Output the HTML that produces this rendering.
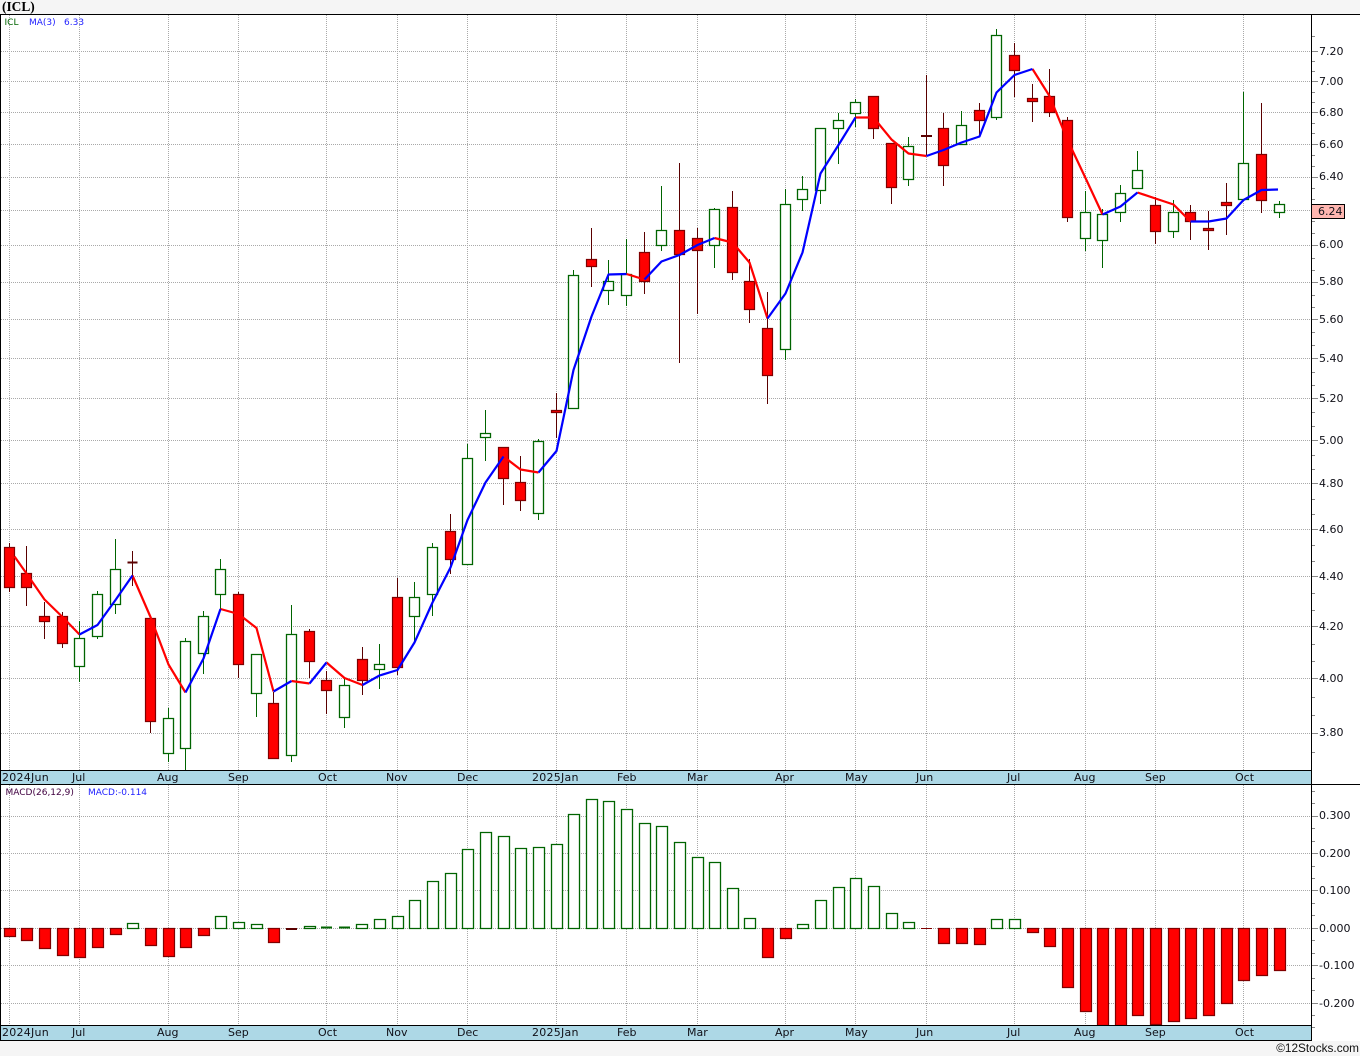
<!DOCTYPE html>
<html lang="en">
<head>
<meta charset="utf-8">
<title>ICL</title>
<style>
html,body{margin:0;padding:0;background:#f5f5f5;width:1360px;height:1056px;overflow:hidden}
svg{display:block}
text{font-family:"DejaVu Sans","Liberation Sans",sans-serif;font-size:11px;fill:#101018}
.s{font-size:9px}
.y{letter-spacing:.25px}
.g{fill:none;stroke:#a9a9a9;stroke-width:1;stroke-dasharray:1 1}
</style>
</head>
<body>
<svg xmlns="http://www.w3.org/2000/svg" width="1360" height="1056" viewBox="0 0 1360 1056">
<rect width="1360" height="1056" fill="#f5f5f5"/>
<rect x="0" y="14" width="1360" height="1027" fill="#fff"/>
<text x="2" y="11" style="font-family:'Liberation Serif',serif;font-weight:bold;font-size:13.4px;fill:#000">(ICL)</text>

<!-- price grid -->
<path class="g" d="M1 51.5H1311M1 81.5H1311M1 112.5H1311M1 144.5H1311M1 177.5H1311M1 210.5H1311M1 245.5H1311M1 282.5H1311M1 319.5H1311M1 358.5H1311M1 398.5H1311M1 440.5H1311M1 483.5H1311M1 529.5H1311M1 576.5H1311M1 626.5H1311M1 678.5H1311M1 733.5H1311"/>
<path class="g" d="M9.5 15V770M79.5 15V770M168.5 15V770M238.5 15V770M326.5 15V770M397.5 15V770M467.5 15V770M556.5 15V770M626.5 15V770M697.5 15V770M785.5 15V770M855.5 15V770M926.5 15V770M1014.5 15V770M1085.5 15V770M1155.5 15V770M1243.5 15V770"/>
<!-- macd grid -->
<path class="g" d="M1 816.5H1311M1 853.5H1311M1 890.5H1311M1 928.5H1311M1 965.5H1311M1 1003.5H1311"/>
<path class="g" d="M9.5 785V1026M79.5 785V1026M168.5 785V1026M238.5 785V1026M326.5 785V1026M397.5 785V1026M467.5 785V1026M556.5 785V1026M626.5 785V1026M697.5 785V1026M785.5 785V1026M855.5 785V1026M926.5 785V1026M1014.5 785V1026M1085.5 785V1026M1155.5 785V1026M1243.5 785V1026"/>

<!-- wicks -->
<path fill="none" stroke="#006400" d="M79.5 621V682M97.5 591V639M115.5 539V614M168.5 708V762M185.5 638V770M203.5 611V674M220.5 559V609M256.5 654V717M291.5 605V762M344.5 678V728M379.5 644V689M414.5 582V643M432.5 543V616M467.5 444V564M485.5 410V461M538.5 439V520M573.5 270V408M608.5 260V305M626.5 239V306M661.5 186V251M714.5 208V268M785.5 189V360M802.5 176V211M820.5 128V204M838.5 113V164M855.5 99V127M908.5 137V186M961.5 111V145M996.5 29V120M1085.5 191V251M1102.5 209V268M1120.5 185V222M1137.5 151V188M1173.5 200V238M1243.5 92V199M1279.5 201V218"/>
<path fill="none" stroke="#5a0000" d="M9.5 543V592M26.5 546V606M44.5 602V639M62.5 612V648M132.5 551V586M150.5 618V733M238.5 592V678M273.5 692V759M309.5 629V678M326.5 671V714M362.5 647V695M397.5 578V675M450.5 514V574M503.5 447V505M520.5 456V511M556.5 393V438M591.5 228V287M644.5 232V294M679.5 163V363M697.5 228V314M732.5 191V280M749.5 259V323M767.5 292V404M873.5 96V139M891.5 143V204M926.5 75V156M943.5 113V186M979.5 103V137M1014.5 43V97M1032.5 84V122M1049.5 69V117M1067.5 117V222M1155.5 197V244M1190.5 205V240M1208.5 211V250M1226.5 183V235M1261.5 103V213"/>

<!-- hollow bodies -->
<path fill="#fff" stroke="#006400" stroke-width="1.3" d="M74.5 638.5h10V666.5h-10zM92.5 594.5h10V636.5h-10zM110.5 569.5h10V604.5h-10zM163.5 718.5h10V753.5h-10zM180.5 641.5h10V748.5h-10zM198.5 616.5h10V653.5h-10zM215.5 569.5h10V594.5h-10zM251.5 654.5h10V693.5h-10zM286.5 634.5h10V755.5h-10zM339.5 685.5h10V717.5h-10zM374.5 664.5h10V669.5h-10zM409.5 597.5h10V616.5h-10zM427.5 547.5h10V594.5h-10zM462.5 458.5h10V564.5h-10zM480.5 433.5h10V437.5h-10zM533.5 441.5h10V513.5h-10zM568.5 275.5h10V408.5h-10zM603.5 281.5h10V290.5h-10zM621.5 274.5h10V295.5h-10zM656.5 230.5h10V245.5h-10zM709.5 209.5h10V245.5h-10zM780.5 204.5h10V349.5h-10zM797.5 189.5h10V199.5h-10zM815.5 128.5h10V190.5h-10zM833.5 120.5h10V128.5h-10zM850.5 102.5h10V113.5h-10zM903.5 146.5h10V179.5h-10zM956.5 125.5h10V144.5h-10zM991.5 35.5h10V117.5h-10zM1080.5 212.5h10V238.5h-10zM1097.5 214.5h10V240.5h-10zM1115.5 193.5h10V212.5h-10zM1132.5 170.5h10V188.5h-10zM1168.5 212.5h10V231.5h-10zM1238.5 163.5h10V199.5h-10zM1274.5 204.5h10V212.5h-10z"/>
<!-- filled bodies -->
<path fill="#f00" stroke="#800000" stroke-width="1.2" d="M4.5 547.5h10V587.5h-10zM21.5 573.5h10V587.5h-10zM39.5 616.5h10V621.5h-10zM57.5 616.5h10V643.5h-10zM145.5 618.5h10V721.5h-10zM233.5 594.5h10V664.5h-10zM268.5 703.5h10V758.5h-10zM304.5 631.5h10V661.5h-10zM321.5 680.5h10V690.5h-10zM357.5 659.5h10V680.5h-10zM392.5 597.5h10V667.5h-10zM445.5 531.5h10V559.5h-10zM498.5 447.5h10V478.5h-10zM515.5 482.5h10V500.5h-10zM551.5 410.5h10V412.5h-10zM586.5 259.5h10V266.5h-10zM639.5 252.5h10V281.5h-10zM674.5 230.5h10V254.5h-10zM692.5 238.5h10V250.5h-10zM727.5 207.5h10V272.5h-10zM744.5 281.5h10V309.5h-10zM762.5 328.5h10V375.5h-10zM868.5 96.5h10V128.5h-10zM886.5 143.5h10V187.5h-10zM938.5 128.5h10V165.5h-10zM974.5 110.5h10V120.5h-10zM1009.5 55.5h10V70.5h-10zM1027.5 98.5h10V101.5h-10zM1044.5 96.5h10V112.5h-10zM1062.5 120.5h10V217.5h-10zM1150.5 205.5h10V231.5h-10zM1185.5 212.5h10V221.5h-10zM1203.5 228.5h10V230.5h-10zM1221.5 202.5h10V205.5h-10zM1256.5 154.5h10V200.5h-10z"/>
<path fill="none" stroke="#5a0000" stroke-width="2" d="M127.5 562.5h10M921 136h11"/>

<!-- moving average -->
<g fill="none" stroke-width="2.2" stroke-linejoin="round">
<path stroke="#f00" d="M14.5 556.5L26.5 573.5L44.5 599.5L62.5 617L79.5 634.5M132.5 575.5L150.5 617L168.5 664.5L185.5 692.5M220.5 609L238.5 614L256.5 628L273.5 691.5M291.5 681L309.5 683.5M326.5 662.5L344.5 678L362.5 685M503.5 456.5L520.5 469.5L538.5 472.5M626.5 274L644.5 279.5M714.5 238L732.5 242.5L749.5 262.5L767.5 318.5M855.5 117.5L873.5 117.5L891.5 139.5L908.5 153.5L926.5 156M1032.5 69L1049.5 96L1067.5 140L1085.5 178L1102.5 214.5M1137.5 192.5L1155.5 198.5L1173.5 204.5L1190.5 221.5"/>
<path stroke="#00f" d="M79.5 634.5L97.5 625L115.5 600L132.5 575.5M185.5 692.5L203.5 658.5L220.5 609M273.5 691.5L291.5 681M309.5 683.5L326.5 662.5M362.5 685L379.5 675.5L397.5 670L414.5 642.5L432.5 602.5L450.5 567.5L467.5 520L485.5 482.5L503.5 456.5M538.5 472.5L556.5 451L573.5 370L591.5 316.5L608.5 274.5L626.5 274M644.5 279.5L661.5 261.5L679.5 255L697.5 245L714.5 238M767.5 318.5L785.5 293.5L802.5 252.5L820.5 173.5L838.5 145L855.5 117.5M926.5 156L943.5 150L961.5 142.5L979.5 136.5L996.5 92.5L1014.5 75L1032.5 69M1102.5 214.5L1120.5 206.5L1137.5 192.5M1190.5 221.5L1208.5 221.5L1226.5 218.5L1243.5 200L1261.5 190L1278 189.5"/>
</g>

<!-- macd bars -->
<path fill="#fff" stroke="#006400" stroke-width="1.3" d="M127.5 923.5h11V928.5h-11zM215.5 916.5h11V928.5h-11zM233.5 922.5h11V928.5h-11zM251.5 924.5h11V928.5h-11zM304.5 926.5h11V928.5h-11zM374.5 919.5h11V928.5h-11zM356.5 924.5h11V928.5h-11zM392.5 916.5h11V928.5h-11zM409.5 900.5h11V928.5h-11zM427.5 881.5h11V928.5h-11zM445.5 873.5h11V928.5h-11zM462.5 849.5h11V928.5h-11zM480.5 832.5h11V928.5h-11zM498.5 836.5h11V928.5h-11zM515.5 848.5h11V928.5h-11zM533.5 847.5h11V928.5h-11zM551.5 844.5h11V928.5h-11zM568.5 814.5h11V928.5h-11zM586.5 799.5h11V928.5h-11zM603.5 801.5h11V928.5h-11zM621.5 809.5h11V928.5h-11zM639.5 823.5h11V928.5h-11zM656.5 826.5h11V928.5h-11zM674.5 842.5h11V928.5h-11zM692.5 857.5h11V928.5h-11zM709.5 862.5h11V928.5h-11zM727.5 888.5h11V928.5h-11zM744.5 918.5h11V928.5h-11zM797.5 924.5h11V928.5h-11zM815.5 900.5h11V928.5h-11zM833.5 887.5h11V928.5h-11zM850.5 878.5h11V928.5h-11zM868.5 886.5h11V928.5h-11zM886.5 913.5h11V928.5h-11zM903.5 922.5h11V928.5h-11zM991.5 919.5h11V928.5h-11zM1009.5 919.5h11V928.5h-11z"/>
<path fill="none" stroke="#006400" stroke-width="2" d="M321 927.5h11M339 927.5h11"/>
<path fill="#f00" stroke="#800000" stroke-width="1.2" d="M4.5 928.5h11V936.5h-11zM21.5 928.5h11V940.5h-11zM39.5 928.5h11V948.5h-11zM57.5 928.5h11V955.5h-11zM74.5 928.5h11V957.5h-11zM92.5 928.5h11V947.5h-11zM110.5 928.5h11V934.5h-11zM145.5 928.5h11V945.5h-11zM163.5 928.5h11V956.5h-11zM180.5 928.5h11V947.5h-11zM198.5 928.5h11V935.5h-11zM268.5 928.5h11V942.5h-11zM762.5 928.5h11V957.5h-11zM780.5 928.5h11V938.5h-11zM938.5 928.5h11V943.5h-11zM956.5 928.5h11V943.5h-11zM974.5 928.5h11V944.5h-11zM1027.5 928.5h11V932.5h-11zM1044.5 928.5h11V946.5h-11zM1062.5 928.5h11V987.5h-11zM1080.5 928.5h11V1011.5h-11zM1097.5 928.5h11V1025.5h-11zM1115.5 928.5h11V1025.5h-11zM1132.5 928.5h11V1015.5h-11zM1150.5 928.5h11V1024.5h-11zM1168.5 928.5h11V1021.5h-11zM1185.5 928.5h11V1018.5h-11zM1203.5 928.5h11V1015.5h-11zM1221.5 928.5h11V1003.5h-11zM1238.5 928.5h11V980.5h-11zM1256.5 928.5h11V975.5h-11zM1274.5 928.5h11V970.5h-11z"/>
<path fill="none" stroke="#5a0000" stroke-width="2" d="M286 929h11"/>
<path fill="none" stroke="#800000" d="M921 928.5h11"/>

<!-- date bands -->
<rect x="0" y="770" width="1311" height="14" fill="#add8e6"/>
<rect x="0" y="1026" width="1311" height="14" fill="#add8e6"/>
<path fill="none" stroke="#000" d="M0 14.5H1360M0 784.5H1360M0 770.5H1311M0 1025.5H1311M0 1040.5H1311M.5 14V1041M1311.5 14V1041"/>

<!-- axis ticks -->
<path fill="none" stroke="#888" d="M1312 36.5h3M1312 61.5h3M1312 71.5h3M1312 92.5h3M1312 102.5h3M1312 123.5h3M1312 133.5h3M1312 155.5h3M1312 166.5h3M1312 188.5h3M1312 199.5h3M1312 221.5h3M1312 233.5h3M1312 258.5h3M1312 270.5h3M1312 295.5h3M1312 307.5h3M1312 332.5h3M1312 345.5h3M1312 372.5h3M1312 385.5h3M1312 412.5h3M1312 426.5h3M1312 455.5h3M1312 469.5h3M1312 499.5h3M1312 514.5h3M1312 545.5h3M1312 561.5h3M1312 593.5h3M1312 610.5h3M1312 644.5h3M1312 661.5h3M1312 697.5h3M1312 715.5h3M1312 752.5h3M1312 791.5h3M1312 803.5h3M1312 828.5h3M1312 841.5h3M1312 866.5h3M1312 878.5h3M1312 903.5h3M1312 915.5h3M1312 940.5h3M1312 953.5h3M1312 978.5h3M1312 990.5h3M1312 1015.5h3M1312 1027.5h3"/>
<path fill="none" stroke="#888" d="M1312 51.5h6M1312 81.5h6M1312 112.5h6M1312 144.5h6M1312 177.5h6M1312 210.5h6M1312 245.5h6M1312 282.5h6M1312 319.5h6M1312 358.5h6M1312 398.5h6M1312 440.5h6M1312 483.5h6M1312 529.5h6M1312 576.5h6M1312 626.5h6M1312 678.5h6M1312 733.5h6M1312 816.5h6M1312 853.5h6M1312 890.5h6M1312 928.5h6M1312 965.5h6M1312 1003.5h6"/>

<!-- price labels -->
<text x="1319" y="55">7.20</text>
<text x="1319" y="85">7.00</text>
<text x="1319" y="116">6.80</text>
<text x="1319" y="148">6.60</text>
<text x="1319" y="180">6.40</text>
<text x="1319" y="248">6.00</text>
<text x="1319" y="285">5.80</text>
<text x="1319" y="323">5.60</text>
<text x="1319" y="362">5.40</text>
<text x="1319" y="402">5.20</text>
<text x="1319" y="444">5.00</text>
<text x="1319" y="487">4.80</text>
<text x="1319" y="533">4.60</text>
<text x="1319" y="580">4.40</text>
<text x="1319" y="630">4.20</text>
<text x="1319" y="682">4.00</text>
<text x="1319" y="736">3.80</text>
<rect x="1311.5" y="204.5" width="33" height="14" fill="#ffb6b0" stroke="#000"/>
<text x="1318" y="215">6.24</text>

<!-- macd labels -->
<text x="1319" y="819">0.300</text>
<text x="1319" y="857">0.200</text>
<text x="1319" y="894">0.100</text>
<text x="1319" y="932">0.000</text>
<text x="1319" y="969">-0.100</text>
<text x="1319" y="1007">-0.200</text>

<!-- date labels top -->
<text class="y" x="2" y="781">2024Jun</text><text x="72" y="781">Jul</text><text x="157" y="781">Aug</text><text x="228" y="781">Sep</text><text x="318" y="781">Oct</text><text x="386" y="781">Nov</text><text x="457" y="781">Dec</text><text class="y" x="532" y="781">2025Jan</text><text x="617" y="781">Feb</text><text x="687" y="781">Mar</text><text x="775" y="781">Apr</text><text x="845" y="781">May</text><text x="916" y="781">Jun</text><text x="1007" y="781">Jul</text><text x="1074" y="781">Aug</text><text x="1145" y="781">Sep</text><text x="1235" y="781">Oct</text>
<!-- date labels bottom -->
<text class="y" x="2" y="1036">2024Jun</text><text x="72" y="1036">Jul</text><text x="157" y="1036">Aug</text><text x="228" y="1036">Sep</text><text x="318" y="1036">Oct</text><text x="386" y="1036">Nov</text><text x="457" y="1036">Dec</text><text class="y" x="532" y="1036">2025Jan</text><text x="617" y="1036">Feb</text><text x="687" y="1036">Mar</text><text x="775" y="1036">Apr</text><text x="845" y="1036">May</text><text x="916" y="1036">Jun</text><text x="1007" y="1036">Jul</text><text x="1074" y="1036">Aug</text><text x="1145" y="1036">Sep</text><text x="1235" y="1036">Oct</text>

<!-- legends -->
<text class="s" x="4.5" y="25" style="fill:#006400">ICL</text>
<text class="s" x="29" y="25" style="fill:#2222ff">MA(3)</text>
<text class="s" x="64" y="25" style="fill:#2222ff">6.33</text>
<text class="s" x="5.5" y="795" style="fill:#400040">MACD(26,12,9)</text>
<text class="s" x="88" y="795" style="fill:#2222ff">MACD:-0.114</text>

<!-- footer -->
<text x="1359" y="1052" text-anchor="end" style="font-family:'Liberation Sans',sans-serif;font-size:11.8px;fill:#111">©12Stocks.com</text>
</svg>
</body>
</html>
